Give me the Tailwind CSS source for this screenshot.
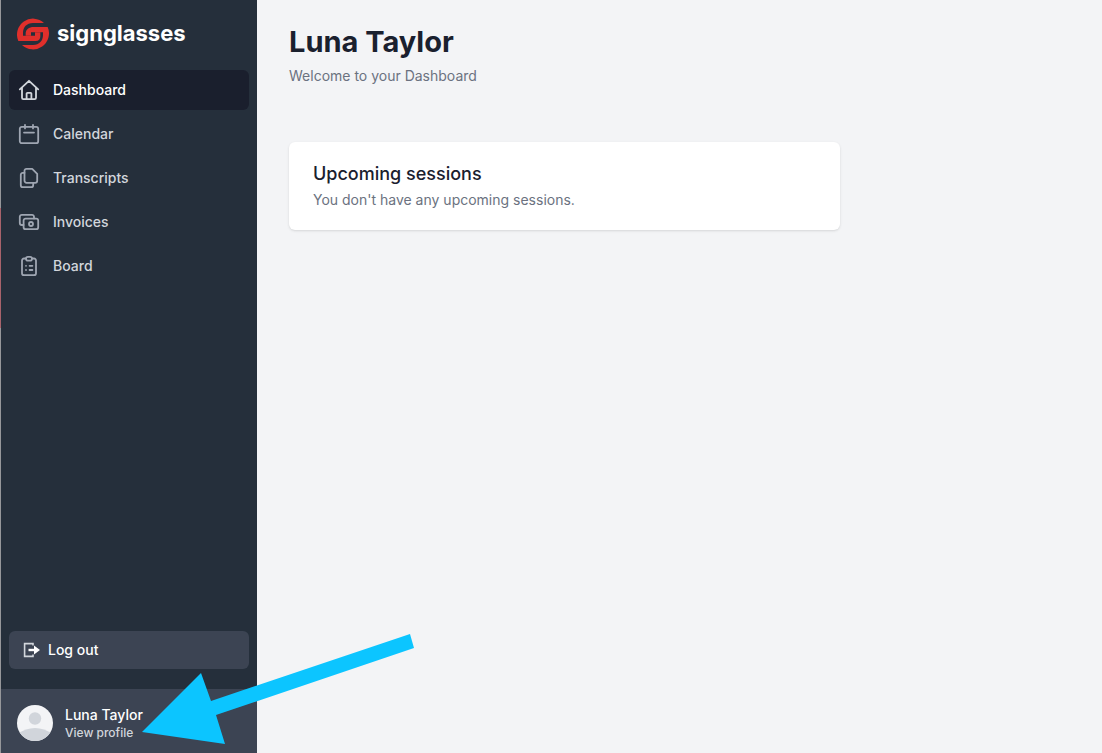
<!DOCTYPE html>
<html lang="en">

<head>
    <meta charset="UTF-8">
    <meta name="viewport" content="width=device-width, initial-scale=1.0">
    <script src="https://cdn.jsdelivr.net/npm/@tailwindcss/browser@4"></script>
    <title>Signglasses - Dashboard</title>
</head>

<body class="bg-[#f3f4f6] font-['Inter',sans-serif] text-sm">
    <div class="relative flex min-h-screen overflow-hidden">
        <div class="flex w-px shrink-0 flex-col bg-[#96979a]">
            <div class="mt-52 h-30 bg-[#a8636b]"></div>
        </div>
        <aside class="flex w-64 shrink-0 flex-col bg-[#252f3b]">
            <a href="#" class="mt-4 flex items-center gap-2 px-4 text-white">
                <svg class="mt-0.5 size-8" viewBox="0 0 96 96" fill="#e02f2b" aria-hidden="true">
                    <path d="M4 69A48 48 0 0 1 81 15H48C29 15 18 28 18 45V53H54V43H70V55Q70 69 56 69Z" />
                    <path d="M92 27A48 48 0 0 1 15 81H48C67 81 78 68 78 51V43H42V53H26V47C26 34 36 27 50 27Z" />
                </svg>
                <span class="text-[22px] leading-8 font-bold">signglasses</span>
            </a>
            <nav class="mt-5 flex flex-1 flex-col gap-1 px-2 font-medium text-[#d2d6dc]">
                <a href="#" class="flex h-10 items-center gap-3 rounded-md bg-[#1a1f2d] px-2 text-white">
                    <svg class="size-6 text-[#d2d6dc]" viewBox="0 0 24 24" fill="none" stroke="currentColor" stroke-width="1.8" stroke-linecap="round" stroke-linejoin="round" aria-hidden="true">
                        <path d="M2.8 11.4L12 2.8l9.2 8.6M5 9.8v10a1.3 1.3 0 0 0 1.3 1.3h11.4a1.3 1.3 0 0 0 1.3-1.3v-10M9.6 21v-5.4a.8.8 0 0 1 .8-.8h3.2a.8.8 0 0 1 .8.8V21" />
                    </svg>
                    Dashboard
                </a>
                <a href="#" class="flex h-10 items-center gap-3 rounded-md px-2">
                    <svg class="size-6 text-[#9fa6b2]" viewBox="0 0 24 24" fill="none" stroke="currentColor" stroke-width="1.8" stroke-linecap="round" stroke-linejoin="round" aria-hidden="true">
                        <rect x="2.8" y="4.8" width="18.4" height="16.4" rx="2" />
                        <path d="M8 2.8v3.6M16 2.8v3.6M7 10.6h10" />
                    </svg>
                    Calendar
                </a>
                <a href="#" class="flex h-10 items-center gap-3 rounded-md px-2">
                    <svg class="size-6 text-[#9fa6b2]" viewBox="0 0 24 24" fill="none" stroke="currentColor" stroke-width="1.8" stroke-linecap="round" stroke-linejoin="round" aria-hidden="true">
                        <path d="M9.5 2.8h5.7l5 5v7a2 2 0 0 1-2 2H9.5a2 2 0 0 1-2-2v-10a2 2 0 0 1 2-2z" />
                        <path d="M7.5 6.8H5.8a2 2 0 0 0-2 2v10.4a2 2 0 0 0 2 2h8.4a2 2 0 0 0 2-2v-2.4" />
                    </svg>
                    Transcripts
                </a>
                <a href="#" class="flex h-10 items-center gap-3 rounded-md px-2">
                    <svg class="size-6 text-[#9fa6b2]" viewBox="0 0 24 24" fill="none" stroke="currentColor" stroke-width="1.8" stroke-linecap="round" stroke-linejoin="round" aria-hidden="true">
                        <path d="M17 8.4V6.8a2 2 0 0 0-2-2H4.8a2 2 0 0 0-2 2V13a2 2 0 0 0 2 2h1.7" />
                        <rect x="6.6" y="8.6" width="14.6" height="10.6" rx="2" />
                        <circle cx="14" cy="14" r="2" />
                    </svg>
                    Invoices
                </a>
                <a href="#" class="flex h-10 items-center gap-3 rounded-md px-2">
                    <svg class="size-6 text-[#9fa6b2]" viewBox="0 0 24 24" fill="none" stroke="currentColor" stroke-width="1.8" stroke-linecap="round" stroke-linejoin="round" aria-hidden="true">
                        <path d="M9 4.5H7a2 2 0 0 0-2 2v12.7a2 2 0 0 0 2 2h10a2 2 0 0 0 2-2V6.5a2 2 0 0 0-2-2h-2" />
                        <rect x="9" y="2.8" width="6" height="3.8" rx="1.9" />
                        <path d="M9 11.8h.01M12.6 11.8h2.8M9 16h.01M12.6 16h2.8" />
                    </svg>
                    Board
                </a>
            </nav>
            <div class="px-2 pb-5">
                <button type="button" class="flex h-[38px] w-full items-center gap-2 rounded-md bg-[#3c4453] px-3.5 font-medium text-white">
                    <svg class="h-4 w-[17px]" viewBox="0 0 17 16" fill="none" stroke="#d2d6dc" stroke-width="1.6" aria-hidden="true">
                        <path d="M10 3.4V1.6H1.6v12.8H10v-1.8" />
                        <path d="M5.5 8H12" stroke="#fff" stroke-width="2.4" />
                        <path d="M11 3.6L17 8l-6 4.4z" fill="#fff" stroke="none" />
                    </svg>
                    Log out
                </button>
            </div>
            <a href="#" class="flex h-16 items-center gap-3 bg-[#3c4453] px-4 pt-1">
                <svg class="size-9 rounded-full bg-[#f3f4f6]" viewBox="0 0 36 36" fill="#d1d5db" aria-hidden="true">
                    <circle cx="18" cy="13.5" r="6.2" />
                    <path d="M0 29Q18 17 36 29V36H0Z" />
                </svg>
                <span class="flex flex-col">
                    <span class="font-medium text-white">Luna Taylor</span>
                    <span class="text-xs font-medium text-[#d2d6dc]">View profile</span>
                </span>
            </a>
        </aside>
        <main class="flex-1 px-8 pt-6">
            <h1 class="text-[29px] leading-9 font-bold text-[#1a202e]">Luna Taylor</h1>
            <p class="mt-1.5 text-[#6b7280]">Welcome to your Dashboard</p>
            <section class="mt-14 w-12/17 rounded-md bg-white px-6 py-5 shadow">
                <h2 class="text-lg leading-6 font-medium text-[#1a202e]">Upcoming sessions</h2>
                <p class="mt-1 text-[#6b7280]">You don't have any upcoming sessions.</p>
            </section>
        </main>
        <!-- arrow pointing at the profile link -->
        <svg class="pointer-events-none absolute bottom-0 left-[142px] h-[120px] w-[273px]" viewBox="0 0 273 120" fill="#0cc5ff" aria-hidden="true">
            <path d="M0 99L59 40L69 68L268 1L272 15L74 82L83 111Z" />
        </svg>
    </div>
</body>

</html>
